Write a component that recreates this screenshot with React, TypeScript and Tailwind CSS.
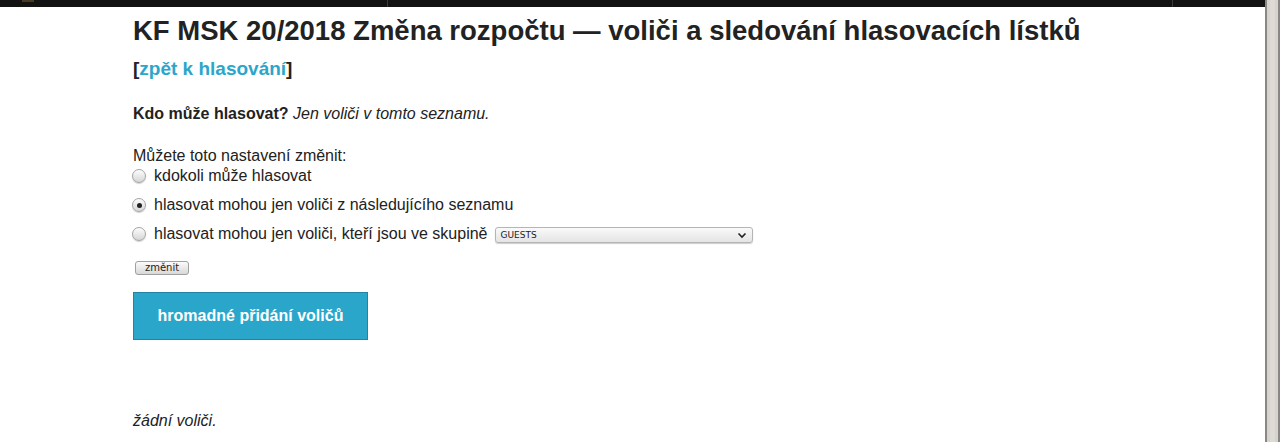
const Radio = ({ checked }: { checked?: boolean }) => (
  <span className="inline-flex h-[14px] w-[14px] shrink-0 items-center justify-center rounded-full border border-[#a4a4a4] bg-gradient-to-b from-[#fdfdfd] to-[#d6d6d6] shadow-[0_1px_1px_rgba(0,0,0,0.18)]">
    {checked && <span className="h-[5px] w-[5px] rounded-full bg-[#222]" />}
  </span>
);

const options = [
  { label: "kdokoli může hlasovat", checked: false },
  { label: "hlasovat mohou jen voliči z následujícího seznamu", checked: true },
];

export default function App() {
  return (
    <div className="flex h-[442px] w-[1280px] overflow-hidden bg-white font-['Liberation_Sans',Arial,sans-serif] text-[#222]">
      <div className="flex flex-1 flex-col">
        <div className="flex h-[7px] bg-[#121212]">
          <div className="ml-[22px] h-[2px] w-[12px] bg-[#4a3a24]" />
          <div className="ml-[353px] w-px bg-[#3a3a3a]" />
          <div className="ml-[784px] w-px bg-[#3a3a3a]" />
        </div>

        <div className="pl-[133px]">
          <h1 className="mt-[8px] text-[27.5px] font-bold leading-[32px]">
            KF MSK 20/2018 Změna rozpočtu — voliči a sledování hlasovacích lístků
          </h1>
          <div className="mt-[11px] text-[19px] font-bold leading-[22px]">
            [<span className="text-[#2ba6cb]">zpět k hlasování</span>]
          </div>

          <p className="mt-[25px] text-[16px] leading-[18px]">
            <b>Kdo může hlasovat?</b> <i>Jen voliči v tomto seznamu.</i>
          </p>

          <p className="mt-[24px] text-[16px] leading-[18px]">Můžete toto nastavení změnit:</p>
          <div className="mt-[2px] flex flex-col gap-[11px] text-[16px] leading-[18px]">
            {options.map((o) => (
              <label key={o.label} className="flex items-center gap-[8px] -ml-[1px]">
                <Radio checked={o.checked} />
                {o.label}
              </label>
            ))}
            <label className="flex items-center gap-[8px] -ml-[1px]">
              <Radio />
              hlasovat mohou jen voliči, kteří jsou ve skupině
              <span className="ml-[-1px] mt-[2px] flex h-[16px] w-[258px] items-center justify-between rounded-[3px] border border-[#b5b5b5] bg-gradient-to-b from-[#fafafa] to-[#e4e4e4] pl-[5px] pr-[5px] font-['DejaVu_Sans',sans-serif] text-[9px] shadow-[0_1px_1px_rgba(0,0,0,0.2)]">
                GUESTS
                <svg width="10" height="7" viewBox="0 0 10 7">
                  <path d="M1.5 1.5 L5 5 L8.5 1.5" stroke="#222" strokeWidth="1.6" fill="none" />
                </svg>
              </span>
            </label>
          </div>

          <button className="ml-[2px] mt-[18px] flex h-[14px] w-[54px] items-center justify-center rounded-[3px] border border-[#a0a0a0] bg-gradient-to-b from-[#fbfbfb] to-[#d8d8d8] font-['DejaVu_Sans',sans-serif] text-[10px] leading-none text-[#222]">
            změnit
          </button>

          <button className="mt-[17px] flex h-[48px] w-[235px] items-center justify-center border border-[#2284a1] bg-[#2ba6cb] text-[16px] font-bold text-white">
            hromadné přidání voličů
          </button>

          <p className="mt-[72px] text-[16px] italic leading-[18px]">žádní voliči.</p>
        </div>
      </div>

      <div className="flex w-[15px] border-l-[2px] border-r-[2px] border-[#8a8682] bg-[#d6d3cf]">
        <div className="mx-auto w-[5px] bg-[#dedbd7]" />
      </div>
    </div>
  );
}
